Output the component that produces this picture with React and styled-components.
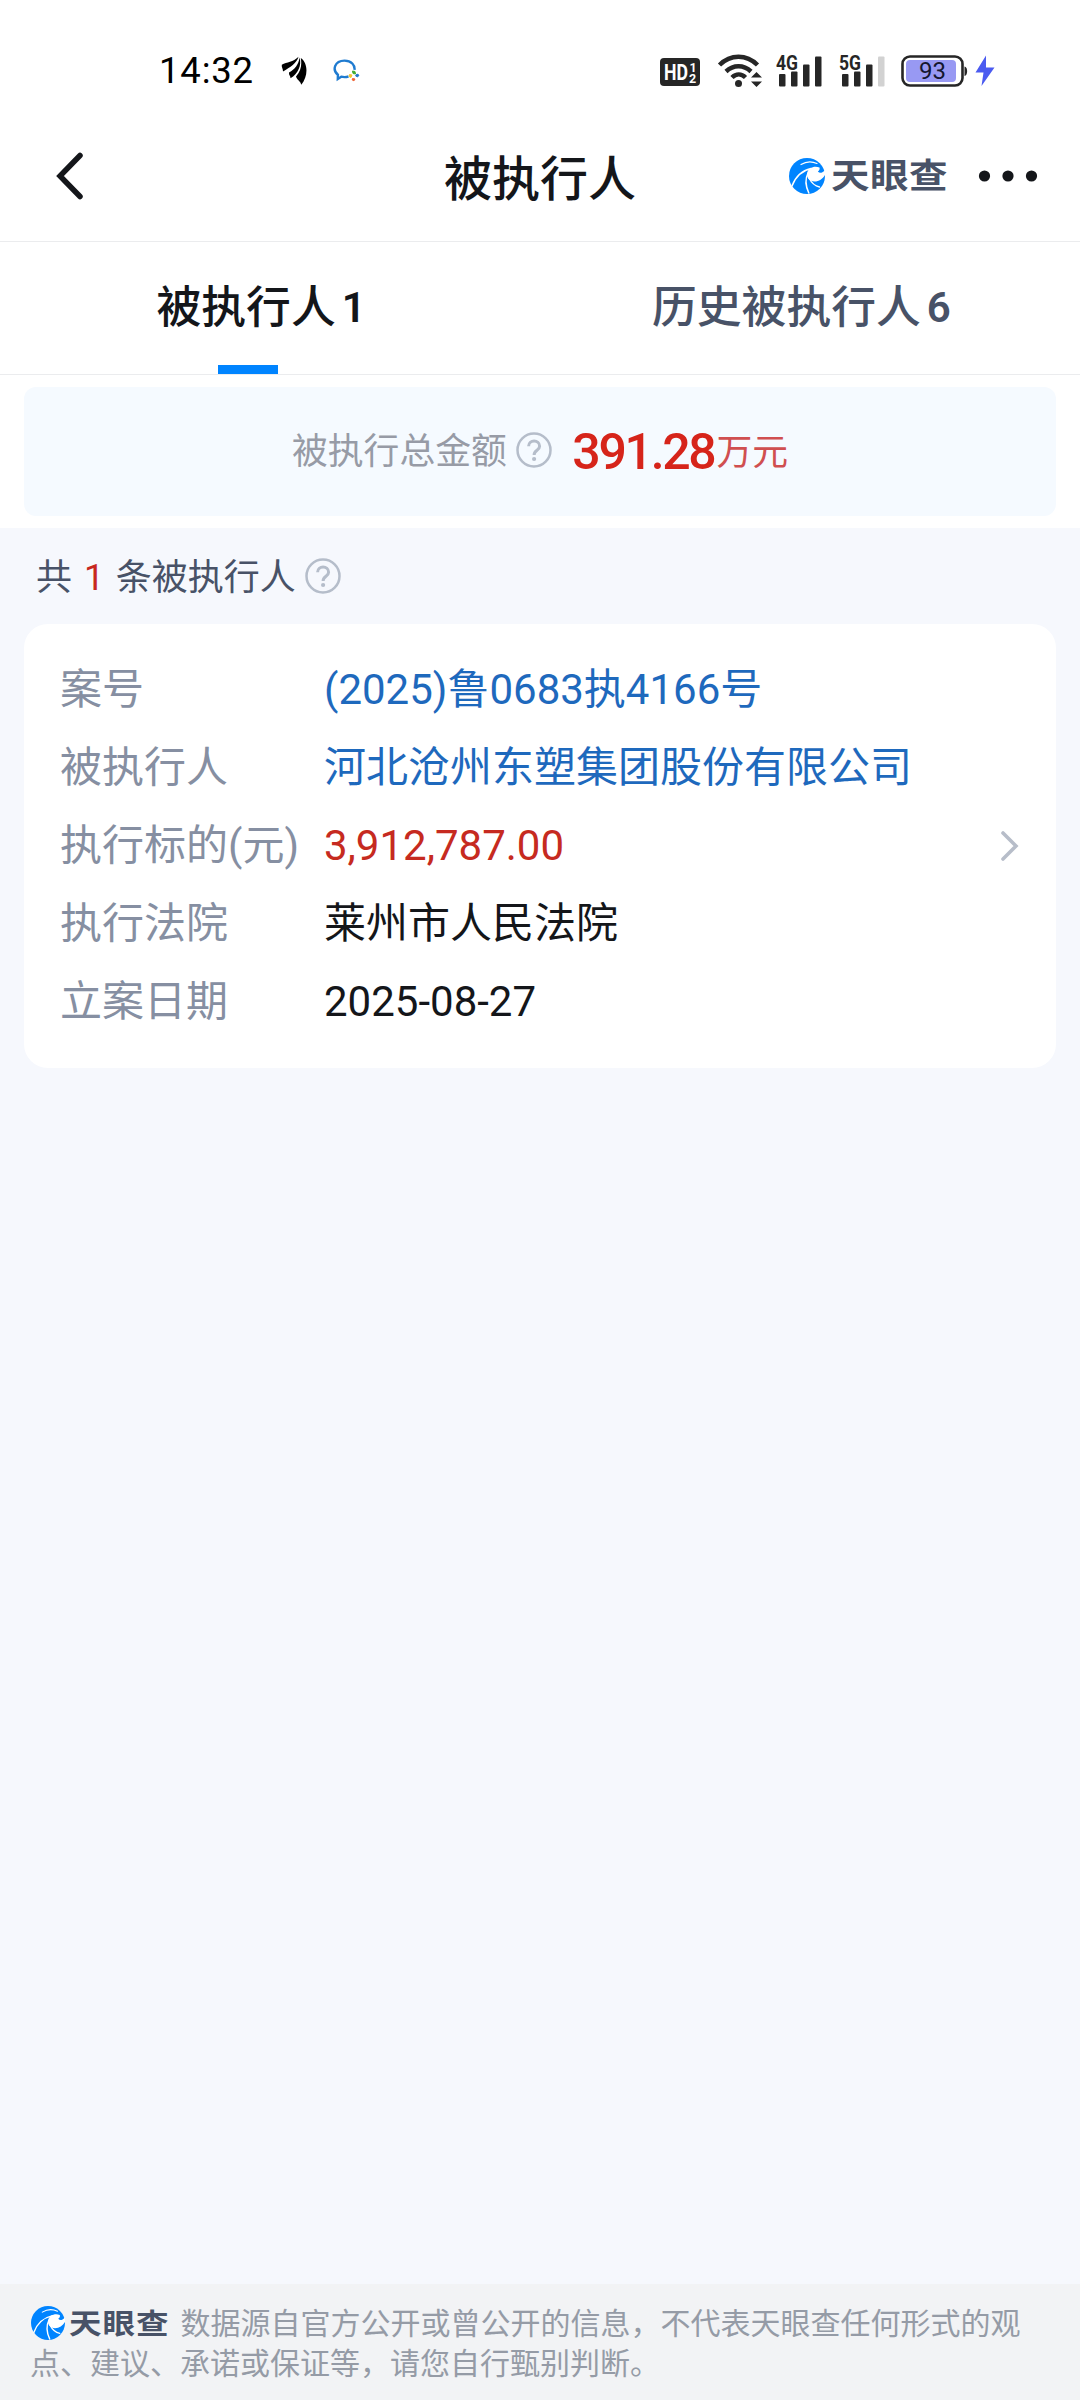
import styled, { createGlobalStyle } from 'styled-components';

const GlobalStyle = createGlobalStyle`
  * { box-sizing: border-box; }
  body {
    margin: 0;
    background: #f6f8fd;
    font-family: Roboto, "Noto Sans CJK SC", sans-serif;
    color: #14161a;
  }
  svg { display: block; flex-shrink: 0; }
`;

const Page = styled.div`
  display: flex;
  flex-direction: column;
  width: 1080px;
  height: 2400px;
  overflow: hidden;
`;

const StatusBar = styled.div`
  display: flex;
  align-items: center;
  height: 111px;
  padding: 31px 84px 0 159px;
  background: #fff;
`;

const Clock = styled.span`
  width: 122px;
  font-size: 36.5px;
  line-height: 40px;
  letter-spacing: 0.8px;
  color: #000;
`;

const StatusLeft = styled.div`
  display: flex;
  align-items: center;
  gap: 25px;
`;

const StatusRight = styled.div`
  display: flex;
  align-items: center;
  margin-left: auto;
`;

const HdBadge = styled.div`
  display: flex;
  align-items: center;
  justify-content: center;
  width: 40px;
  height: 28px;
  margin-top: 2px;
  border-radius: 4px;
  background: #262626;
`;

const Header = styled.header`
  display: grid;
  grid-template-columns: 1fr auto 1fr;
  align-items: center;
  height: 131px;
  padding: 0 42px 0 54px;
  border-bottom: 1px solid #ebecee;
  background: #fff;
`;

const Title = styled.h1`
  margin: 8px 0 0 -12px;
  font-size: 48px;
  line-height: 60px;
  font-weight: 500;
`;

const HeaderRight = styled.div`
  display: flex;
  align-items: center;
  justify-content: flex-end;
  gap: 30px;
`;

const Brand = styled.span`
  display: inline-flex;
  align-items: center;
  gap: ${(p) => (p.$small ? 4 : 6)}px;
  vertical-align: ${(p) => (p.$small ? '-6px' : 'baseline')};
  margin: ${(p) => (p.$small ? '0 11px 0 1px' : 0)};
`;

const BrandName = styled.span`
  margin-top: 2px;
  font-size: ${(p) => (p.$small ? 32.5 : 38.5)}px;
  line-height: ${(p) => (p.$small ? 32 : 36)}px;
  height: ${(p) => (p.$small ? 32 : 36)}px;
  font-weight: 700;
  letter-spacing: ${(p) => (p.$small ? 1 : 0.5)}px;
  color: #485267;
  transform: scaleY(0.88);
`;

const Tabs = styled.nav`
  display: flex;
  height: 133px;
  border-bottom: 1px solid #ebecee;
  background: #fff;
`;

const Tab = styled.div`
  display: flex;
  flex-direction: column;
  align-items: flex-start;
  justify-content: space-between;
  width: ${(p) => p.$width}px;
  padding: 36px 0 0 ${(p) => p.$left}px;
  font-size: 44.8px;
  line-height: 60px;
  font-weight: 500;
  color: ${(p) => (p.$active ? '#14161a' : '#485267')};
`;

const TabText = styled.div`
  display: flex;
  gap: 6px;
`;

const TabCount = styled.span`
  font-size: 42px;
  line-height: 60px;
  font-weight: 600;
`;

const Indicator = styled.div`
  width: 60px;
  height: 9px;
  margin-left: 61px;
  background: #0084ff;
`;

const SummaryWrap = styled.section`
  padding: 12px 24px;
  background: #fff;
`;

const Summary = styled.div`
  display: flex;
  align-items: center;
  height: 129px;
  padding: 0 0 3px 268px;
  border-radius: 12px;
  background: #f5faff;
  font-size: 35.8px;
  line-height: 50px;
  color: #979ba6;
`;

const SummaryText = styled.span`
  margin-top: 3px;
`;

const Amount = styled.strong`
  margin: 4px 0 0 20px;
  font-size: 50px;
  line-height: 60px;
  font-weight: 500;
  letter-spacing: -2.3px;
  color: #d6241a;
`;

const Unit = styled.span`
  margin: 5px 0 0 2px;
  color: #d04f50;
`;

const Help = styled.svg`
  width: 36px;
  height: 36px;
  margin-left: 9.5px;
`;

const CountRow = styled.div`
  display: flex;
  align-items: center;
  height: 96px;
  padding-left: 36px;
  font-size: 36px;
  color: #485267;
`;

const CountText = styled.span`
  margin-top: -5px;
`;

const Red = styled.span`
  margin: 0 11.5px 0 12px;
  color: #c8281e;
`;

const Card = styled.section`
  display: flex;
  align-items: center;
  justify-content: space-between;
  height: 444px;
  margin: 0 24px;
  padding: 0 37px 0 36px;
  border-radius: 24px;
  background: #fff;
`;

const Fields = styled.dl`
  display: grid;
  grid-template-columns: 264px auto;
  grid-auto-rows: 78px;
  margin: 0;
  font-size: 42px;
  line-height: 77px;
`;

const Label = styled.dt`
  color: #868fa2;
  white-space: nowrap;
`;

const Value = styled.dd`
  margin: 0;
  white-space: nowrap;
  color: ${(p) => p.$color || '#14161a'};
`;

const Footer = styled.footer`
  height: 116px;
  margin-top: auto;
  padding: 20px 36px 0 30px;
  background: #f2f3f5;
  font-size: 30px;
  line-height: 40px;
  color: #959ba6;
`;

const rows = [
  { label: '案号', value: '(2025)鲁0683执4166号', color: '#1e69bd' },
  { label: '被执行人', value: '河北沧州东塑集团股份有限公司', color: '#1e69bd' },
  { label: '执行标的(元)', value: '3,912,787.00', color: '#c62a20' },
  { label: '执行法院', value: '莱州市人民法院' },
  { label: '立案日期', value: '2025-08-27' },
];

function BrandMark({ size }) {
  return (
    <svg width={size} height={size} viewBox="0 0 36 36">
      <circle cx="18" cy="18" r="18" fill="#0084ff" />
      <path d="M30.500 9.500C25 7.500 19.500 10 18.300 14.500c-1.300 5 2.200 9 7.200 9 4.500 0 8-2.500 10.500-6.500L36 12.500l-3 2c-1.500.7-3 .3-4.200-1 1.500-.8 2.200-2.300 1.700-4Z" fill="#fff" />
      <g fill="none" stroke="#fff" strokeLinecap="round">
        <path d="M12 6.500C17 3.500 23 3.300 28 5.500" strokeWidth="1.200" />
        <path d="M3 28C6 20 11 13 22 10.500" strokeWidth="1.500" />
        <path d="M19 15c-3 6-2.500 13 .8 20" strokeWidth="1.500" />
        <path d="M20 20c2 4 6 8 10.500 9" strokeWidth="1.300" />
      </g>
    </svg>
  );
}

function Logo({ small }) {
  return (
    <Brand $small={small}>
      <BrandMark size={small ? 34 : 36} />
      <BrandName $small={small}>天眼查</BrandName>
    </Brand>
  );
}

function HelpIcon() {
  return (
    <Help viewBox="0 0 36 36" fill="none" stroke="#b5bdca">
      <circle cx="18" cy="18" r="16.500" strokeWidth="2.500" />
      <path d="M12.600 14.300c0-7 11-7 11 0 0 4.200-5.500 3.800-5.500 8.700" strokeWidth="3" />
      <circle cx="18.100" cy="27" r="2.100" fill="#b5bdca" stroke="none" />
    </Help>
  );
}

// cellular strength: label over four rising bars
function Signal({ label, weak }) {
  return (
    <svg width="48" height="50" viewBox="0 -8 48 50" fill="#262626">
      <text x="0" y="16" fontFamily="Roboto" fontSize="21" fontWeight="700" textLength="22" lengthAdjust="spacingAndGlyphs">{label}</text>
      <rect x="3" y="20" width="6.500" height="12.500" rx="1" />
      <rect x="15" y="17.500" width="6.500" height="15" rx="1" />
      <rect x="27" y="10.500" width="6.500" height="22" rx="1" />
      <rect x="39" y="2.500" width="6.500" height="30" rx="1" fill={weak ? '#d2d2d2' : '#262626'} />
    </svg>
  );
}

function StatusIcons() {
  return (
    <StatusRight>
      <HdBadge>
        <svg width="40" height="28" viewBox="0 0 40 28" fill="#fff" fontFamily="Roboto" fontWeight="700">
          <text x="4" y="22" fontSize="22" textLength="24" lengthAdjust="spacingAndGlyphs">HD</text>
          <text x="29.500" y="13.500" fontSize="12.500">1</text>
          <text x="29" y="24.500" fontSize="12.500">2</text>
        </svg>
      </HdBadge>
      <svg width="76" height="36" viewBox="0 0 76 36">
        <g fill="none" stroke="#262626" strokeWidth="4.500">
          <path d="M19.500 12C30.500 1 46.500 1 57.500 12" />
          <path d="M26 18.500c7.500-7 17.500-7 25 0" />
          <path d="M32 24.500c4-4 9.500-4 13.500 0" />
        </g>
        <circle cx="38.500" cy="30.500" r="3.500" fill="#262626" />
        <path d="M51 24.500 56.500 19l5.500 5.500ZM51 28.500h11L56.500 34Z" fill="#262626" />
      </svg>
      <Signal label="4G" />
      <svg width="15" height="34" />
      <Signal label="5G" weak />
      <svg width="109" height="36" viewBox="0 0 109 36">
        <rect x="15.500" y="3.500" width="60" height="29" rx="7.500" fill="#fff" stroke="#262626" strokeWidth="2.600" />
        <rect x="19" y="7" width="50" height="22" rx="4" fill="#9899f3" />
        <path d="M77.500 13.500c3.500 0 3.500 9.500 0 9.500Z" fill="#262626" />
        <text x="32" y="26" fontFamily="Roboto" fontSize="24" fill="#14162e">93</text>
        <path d="M99 2.500 88.500 19.500h8L94.500 33l13-18.500h-8.500Z" fill="#4b5bf0" />
      </svg>
    </StatusRight>
  );
}

function App() {
  return (
    <>
      <GlobalStyle />
      <Page>
        <StatusBar>
          <Clock>14:32</Clock>
          <StatusLeft>
            <svg width="27" height="30" viewBox="0 0 27 30">
              <path d="M.8 8.800C6 6 12 6.500 17.500.8 16 7 9 11.500 2 15.500 2.200 13 .3 11 .8 8.800Z" fill="#000" />
              <path d="M8 16.500C14 13 17.500 9 18.500 1.500 21 9 17 18 9.500 22.300 9.800 20 7.500 19 8 16.500Z" fill="#000" />
              <path d="M15 20.500C20 15 21 9 19.800 2 27 7 27.500 20 20.300 28.700 19.500 25 16 24 15 20.500Z" fill="#000" />
            </svg>
            <svg width="28" height="24" viewBox="0 0 28 24">
              <path d="M15.500 17.500c-2.500.8-5 .8-7.300.2L4.800 20l.1-4.200C-1 11 1.500 1.600 11.500 1.600c7 0 10.500 4.600 10 9.200" fill="none" stroke="#1f7bd0" strokeWidth="2.400" />
              <path d="m19.500 12 2.500.5.500 2.500-2.500-.5Z" fill="#43ad2f" stroke="#43ad2f" />
              <path d="m24 15 2 1.200-1.500 1.800-2-1.200Z" fill="#2478cb" stroke="#2478cb" />
              <path d="m19.500 19.500 2.500.5-1 1.800-1.800-.8Z" fill="#ee6436" stroke="#ee6436" />
              <path d="m16.500 15.500 2.500.5-1 2.500-2-1Z" fill="#f6c52f" stroke="#f6c52f" />
            </svg>
          </StatusLeft>
          <StatusIcons />
        </StatusBar>

        <Header>
          <svg width="30" height="50" viewBox="0 0 30 50">
            <path d="M26 4.500 6 25l20 20.500" fill="none" stroke="#14161a" strokeWidth="5.500" strokeLinecap="round" />
          </svg>
          <Title>被执行人</Title>
          <HeaderRight>
            <Logo />
            <svg width="60" height="12" viewBox="0 0 60 12" fill="#14161a">
              <circle cx="6.500" cy="6" r="5.600" />
              <circle cx="30" cy="6" r="5.600" />
              <circle cx="53.500" cy="6" r="5.600" />
            </svg>
          </HeaderRight>
        </Header>

        <Tabs>
          <Tab $active $width={516} $left={156.5}>
            <TabText>
              被执行人<TabCount>1</TabCount>
            </TabText>
            <Indicator />
          </Tab>
          <Tab $width={564} $left={136}>
            <TabText>
              历史被执行人<TabCount>6</TabCount>
            </TabText>
          </Tab>
        </Tabs>

        <SummaryWrap>
          <Summary>
            <SummaryText>被执行总金额</SummaryText>
            <HelpIcon />
            <Amount>391.28</Amount>
            <Unit>万元</Unit>
          </Summary>
        </SummaryWrap>

        <CountRow>
          <CountText>
            共<Red>1</Red>条被执行人
          </CountText>
          <HelpIcon />
        </CountRow>

        <Card>
          <Fields>
            {rows.map((v) => (
              <Row key={v.label} {...v} />
            ))}
          </Fields>
          <svg width="20" height="34" viewBox="0 0 20 34">
            <path d="m4 4 13 13L4 30" fill="none" stroke="#b7bdc9" strokeWidth="3.600" strokeLinecap="round" />
          </svg>
        </Card>

        <Footer>
          <Logo small />
          数据源自官方公开或曾公开的信息，不代表天眼查任何形式的观点、建议、承诺或保证等，请您自行甄别判断。
        </Footer>
      </Page>
    </>
  );
}

function Row({ label, value, color }) {
  return (
    <>
      <Label>{label}</Label>
      <Value $color={color}>{value}</Value>
    </>
  );
}

export default App;
